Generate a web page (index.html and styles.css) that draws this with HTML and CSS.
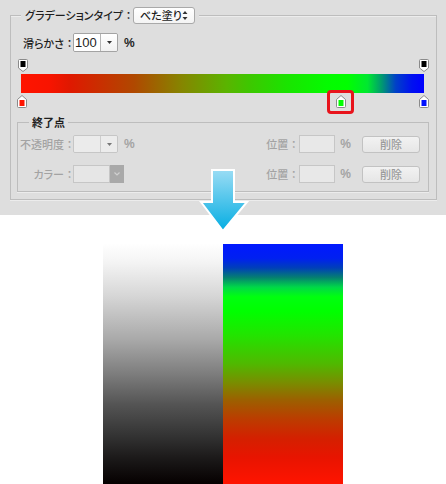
FILE: index.html
```html
<!DOCTYPE html>
<html lang="ja">
<head>
<meta charset="utf-8">
<link rel="stylesheet" href="styles.css">
</head>
<body>
<div class="page">
  <section class="panel">
    <div class="group">
      <div class="group-head">
        <span class="title">グラデーションタイプ<span class="colon">：</span></span>
        <div class="select">
          <span>べた塗り</span>
          <svg class="updown" width="6" height="9" viewBox="0 0 6 9"><path d="M3 0 L5.5 3 H0.5 Z M3 9 L5.5 6 H0.5 Z" fill="#333"/></svg>
        </div>
      </div>

      <div class="row smooth-row">
        <span class="lbl dark">滑らかさ<span class="colon">：</span></span>
        <div class="combo">
          <span class="combo-val">100</span>
          <span class="combo-btn"><svg width="5" height="3" viewBox="0 0 5 3"><path d="M0 0 H5 L2.5 3 Z" fill="#333"/></svg></span>
        </div>
        <span class="pct dark">%</span>
      </div>

      <div class="editor">
        <div class="stops stops-top">
          <svg class="stop" style="left:7px" width="10" height="13" viewBox="0 0 10 13"><path d="M1.5 .5 h7 a1 1 0 0 1 1 1 v7.5 l-4.5 3.5 l-4.5 -3.5 v-7.5 a1 1 0 0 1 1 -1z" fill="#fff" stroke="#8a8a8a"/><rect x="2.5" y="2" width="5" height="6" fill="#000"/></svg>
          <svg class="stop" style="left:408px" width="10" height="13" viewBox="0 0 10 13"><path d="M1.5 .5 h7 a1 1 0 0 1 1 1 v7.5 l-4.5 3.5 l-4.5 -3.5 v-7.5 a1 1 0 0 1 1 -1z" fill="#fff" stroke="#8a8a8a"/><rect x="2.5" y="2" width="5" height="6" fill="#000"/></svg>
        </div>
        <div class="bar"></div>
        <div class="stops stops-bottom">
          <svg class="stop" style="left:6px" width="10" height="13" viewBox="0 0 10 13"><path d="M.5 4.5 l4.5 -4 l4.5 4 v7 a1 1 0 0 1 -1 1 h-7 a1 1 0 0 1 -1 -1z" fill="#fff" stroke="#8a8a8a"/><rect x="2.5" y="5" width="5" height="6" fill="#ff1400"/></svg>
          <svg class="stop" style="left:325px" width="10" height="13" viewBox="0 0 10 13"><path d="M.5 4.5 l4.5 -4 l4.5 4 v7 a1 1 0 0 1 -1 1 h-7 a1 1 0 0 1 -1 -1z" fill="#fff" stroke="#8a8a8a"/><rect x="2.5" y="5" width="5" height="6" fill="#00ff00"/></svg>
          <svg class="stop" style="left:408px" width="10" height="13" viewBox="0 0 10 13"><path d="M.5 4.5 l4.5 -4 l4.5 4 v7 a1 1 0 0 1 -1 1 h-7 a1 1 0 0 1 -1 -1z" fill="#fff" stroke="#8a8a8a"/><rect x="2.5" y="5" width="5" height="6" fill="#0010ff"/></svg>
        </div>
        <div class="highlight"></div>
      </div>

      <div class="subgroup">
        <div class="group-head sub-head"><span class="subtitle">終了点</span></div>
        <div class="row sub-row">
          <span class="lbl">不透明度<span class="colon">：</span></span>
          <div class="combo disabled">
            <span class="combo-val"></span>
            <span class="combo-btn"><svg width="5" height="3" viewBox="0 0 5 3"><path d="M0 0 H5 L2.5 3 Z" fill="#777"/></svg></span>
          </div>
          <span class="pct">%</span>
          <span class="pos-lbl">位置<span class="colon">：</span></span>
          <span class="field"></span>
          <span class="pct pct-r">%</span>
          <span class="btn">削除</span>
        </div>
        <div class="row sub-row">
          <span class="lbl">カラー<span class="colon">：</span></span>
          <div class="color-pick">
            <span class="color-box"></span>
            <span class="color-btn"><svg width="6" height="4" viewBox="0 0 6 4"><path d="M.5 .5 L3 3 L5.5 .5" fill="none" stroke="#d0d0d0" stroke-width="1.2"/></svg></span>
          </div>
          <span class="pos-lbl">位置<span class="colon">：</span></span>
          <span class="field"></span>
          <span class="pct pct-r">%</span>
          <span class="btn">削除</span>
        </div>
      </div>
    </div>
  </section>

  <svg class="arrow" width="50" height="66" viewBox="0 0 50 66">
    <defs>
      <linearGradient id="ag" x1="0" y1="0" x2="0" y2="1">
        <stop offset="0" stop-color="#9adcf4"/>
        <stop offset="1" stop-color="#04ade2"/>
      </linearGradient>
    </defs>
    <path d="M13 2 H35 V34 H48 L24 63 L2 34 H13 Z" fill="url(#ag)" stroke="#fff" stroke-width="2" stroke-linejoin="miter"/>
  </svg>

  <section class="result">
    <div class="swatch bw"></div>
    <div class="swatch color"></div>
  </section>
</div>
</body>
</html>
```

FILE: styles.css
```css
* { box-sizing: border-box; }

html, body {
  margin: 0;
  padding: 0;
  background: #fff;
}

.page {
  position: relative;
  width: 446px;
  height: 484px;
  overflow: hidden;
  font-family: "Noto Sans CJK JP", "Noto Sans", sans-serif;
  font-size: 11px;
  font-weight: 500;
  font-feature-settings: "palt";
  color: #1e1e1e;
}

.colon {
  font-feature-settings: normal;
  letter-spacing: -2px;
}

.panel {
  height: 215px;
  background: #dedede;
  padding: 15px 0 0 10px;
}

.group {
  width: 427px;
  height: 185px;
  border: 1px solid #bdbdbd;
  box-shadow: 0 1px 0 #ececec, inset 0 1px 0 #ececec;
}

.group-head {
  display: flex;
  align-items: center;
  gap: 1px;
  width: max-content;
  height: 17px;
  margin: -9px 0 0 10px;
  padding: 0 4px;
  background: #dedede;
}

.title {
  line-height: 17px;
}

.select {
  display: flex;
  align-items: center;
  justify-content: space-between;
  width: 62px;
  height: 17px;
  padding: 0 6px 0 6px;
  background: linear-gradient(#ffffff, #f4f4f4);
  border: 1px solid #a9a9a9;
  border-radius: 3px;
  line-height: 15px;
}

.row {
  display: flex;
  align-items: center;
}

.smooth-row {
  height: 19px;
  margin-top: 9px;
  padding-left: 8px;
}

.lbl {
  width: 54px;
  text-align: right;
  color: #a3a3a3;
  white-space: nowrap;
}

.lbl.dark, .pct.dark {
  color: #1e1e1e;
}

.combo {
  display: flex;
  height: 19px;
  margin-left: 0;
  border: 1px solid #a3a3a3;
  border-radius: 2px;
  overflow: hidden;
}

.combo-val {
  width: 27px;
  background: #fff;
  border-right: 1px solid #b5b5b5;
  font-family: "Liberation Sans", "Noto Sans", sans-serif;
  font-size: 13px;
  font-weight: normal;
  line-height: 17px;
  padding-left: 1px;
}

.combo-btn {
  display: flex;
  align-items: center;
  justify-content: center;
  width: 16px;
  background: linear-gradient(#ffffff, #f1f1f1);
}

.pct {
  margin-left: 6px;
  color: #a3a3a3;
  font-family: "Liberation Sans", "Noto Sans", sans-serif;
  font-size: 12px;
  font-weight: bold;
}

.editor {
  position: relative;
  margin-top: 7px;
}

.stops {
  position: relative;
}

.stops-top {
  height: 12px;
}

.stops-bottom {
  height: 13px;
  margin-top: 2px;
}

.stop {
  position: absolute;
  top: 0;
}

.bar {
  width: 403px;
  height: 19px;
  margin: 3px 0 0 10px;
  background: linear-gradient(90deg,
    #ff1400 0%, #f81400 7%, #e01800 12%, #c83000 20%, #b04800 28%,
    #858600 40%, #5ab400 51%, #3cc800 57%, #1ae400 66%, #04fb00 76%,
    #00ff00 81%, #00e830 86%, #009a70 89.5%, #0040c8 93%, #0010f0 97%, #0000ff 100%);
}

.highlight {
  position: absolute;
  left: 316px;
  top: 31px;
  width: 27px;
  height: 24px;
  border: 3px solid #e8141c;
  border-radius: 4px;
}

.subgroup {
  width: 412px;
  height: 70px;
  margin: 14px 0 0 6px;
  border: 1px solid #bdbdbd;
  box-shadow: 0 1px 0 #ececec;
  padding-right: 8px;
}

.sub-head {
  height: 14px;
  margin: -8px 0 0 11px;
  padding: 0 3px;
}

.subtitle {
  font-weight: bold;
  line-height: 14px;
}

.sub-row {
  height: 18px;
  margin-top: 6px;
  padding-left: 1px;
}

.sub-row + .sub-row {
  margin-top: 12px;
}

.combo.disabled {
  height: 18px;
  border-color: #c6c6c6;
}

.combo.disabled .combo-val {
  background: #ebebeb;
  border-right-color: #cdcdcd;
}

.combo.disabled .combo-btn {
  background: #ececec;
}

.color-pick {
  display: flex;
  height: 18px;
}

.color-box {
  width: 37px;
  background: #e6e6e6;
  border: 1px solid #c6c6c6;
}

.color-btn {
  display: flex;
  align-items: center;
  justify-content: center;
  width: 14px;
  background: #a9a9a9;
}

.pos-lbl {
  margin-left: auto;
  color: #a3a3a3;
  white-space: nowrap;
}

.field {
  width: 36px;
  height: 18px;
  margin-left: 2px;
  background: #e8e8e8;
  border: 1px solid #c6c6c6;
}

.pct-r {
  margin-left: 5px;
}

.btn {
  display: flex;
  align-items: center;
  justify-content: center;
  width: 58px;
  height: 17px;
  margin-left: 11px;
  color: #9a9a9a;
  background: linear-gradient(#f2f2f2, #e6e6e6);
  border: 1px solid #c2c2c2;
  border-radius: 3px;
}

.arrow {
  position: absolute;
  left: 199px;
  top: 168px;
}

.result {
  display: flex;
  justify-content: center;
  padding-top: 28px;
}

.swatch {
  width: 120px;
  height: 241px;
}

.bw {
  background: linear-gradient(180deg,
    #ffffff 0%, #f4f4f4 8%, #d6d6d6 22%, #a9a9a9 40%, #7e7e7e 54%,
    #545454 67%, #333333 80%, #1c1a1a 89%, #050000 100%);
}

.color {
  margin-top: 1px;
  height: 240px;
  background: linear-gradient(180deg,
    #0018ff 0%, #0020f0 6%, #0040b8 10%, #058070 14%, #00d848 18%,
    #00ff10 22%, #00ff00 28%, #22e400 38%, #50b800 50%, #7a8c00 58%,
    #9c6000 65%, #bc3c00 73%, #d42000 81%, #e81400 89%, #ff1400 100%);
}
```
